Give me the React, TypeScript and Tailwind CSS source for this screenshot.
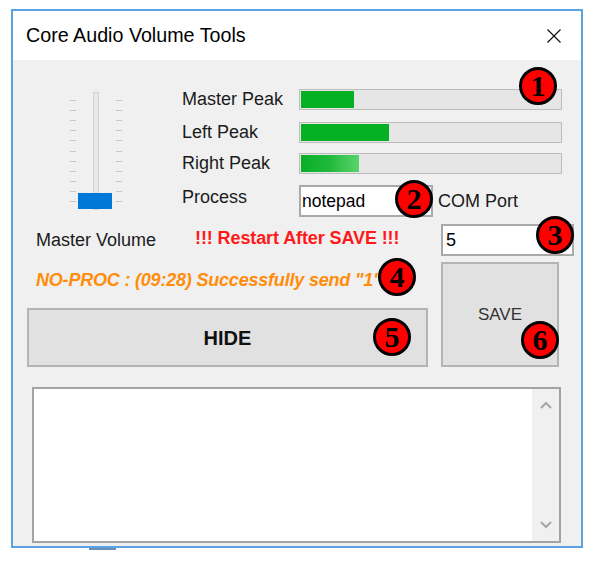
import React from "react"

const badges = [
  { n: "1", x: 519, y: 67 },
  { n: "2", x: 395, y: 180 },
  { n: "3", x: 536, y: 216 },
  { n: "4", x: 378, y: 258 },
  { n: "5", x: 373, y: 318 },
  { n: "6", x: 521, y: 321 },
]

const ticks = [8, 18, 28, 38, 48, 59, 69, 79, 89, 99, 109]

function Slider() {
  return (
    <svg width="56" height="120" viewBox="0 0 56 120" className="mt-[3px] block">
      <rect x="25.5" y="0.5" width="5" height="117" fill="#e7e7e7" stroke="#d4d4d4" />
      {ticks.map(t => (
        <g key={t}>
          <line x1="2" x2="8" y1={t + 0.5} y2={t + 0.5} stroke="#c6c6c6" />
          <line x1="48" x2="54" y1={t + 0.5} y2={t + 0.5} stroke="#c6c6c6" />
        </g>
      ))}
      <rect x="10" y="101" width="34" height="16" fill="#0078d7" />
    </svg>
  )
}

function Bar({ fill, glow }: { fill: number; glow?: boolean }) {
  return (
    <div className="w-[263px] h-[21px] border border-[#bcbcbc] bg-[#e6e6e6] p-px">
      <div
        className={glow ? "h-full bg-gradient-to-r from-[#06b025] via-[#1fb93c] to-[#58d46c]" : "h-full bg-[#06b025]"}
        style={{ width: fill }}
      />
    </div>
  )
}

export default function App() {
  return (
    <div className="relative w-[598px] h-[561px] bg-white overflow-hidden font-['Liberation_Sans',Arial,sans-serif] text-[#1b1b1b]">
      <div className="ml-[11px] mt-[9px] w-[572px] h-[539px] border-2 border-[#5aa2e4] flex flex-col">
        {/* title bar */}
        <div className="h-[49px] bg-white flex items-center justify-between pl-[13px] pr-[20px]">
          <span className="text-[19.7px] text-black">Core Audio Volume Tools</span>
          <svg width="14" height="14" viewBox="0 0 14 14">
            <path d="M0.5 0.5 L13.5 13.5 M13.5 0.5 L0.5 13.5" stroke="#111" strokeWidth="1.2" />
          </svg>
        </div>

        {/* client */}
        <div className="flex-1 bg-[#f0f0f0] flex flex-col">
          <div className="flex items-start pt-[29px] pl-[55px]">
            <Slider />
            <div className="ml-[58px] flex flex-col text-[18px]">
              <div className="flex items-center h-[21px]">
                <span className="w-[117px]">Master Peak</span>
                <Bar fill={53} />
              </div>
              <div className="flex items-center h-[21px] mt-[12px]">
                <span className="w-[117px]">Left Peak</span>
                <Bar fill={88} />
              </div>
              <div className="flex items-center h-[21px] mt-[10px]">
                <span className="w-[117px]">Right Peak</span>
                <Bar fill={58} glow />
              </div>
              <div className="flex items-center h-[32px] mt-[11px]">
                <span className="w-[117px] -mt-[8px]">Process</span>
                <div className="w-[134px] h-[32px] border-2 border-[#a9a9a9] bg-white flex items-center pl-[1px] text-[17.5px] text-black">
                  notepad
                </div>
                <span className="ml-[5px]">COM Port</span>
              </div>
            </div>
          </div>

          <div className="flex mt-[7px] pl-[14px]">
            <div className="w-[401px] flex flex-col">
              <div className="h-[32px] flex items-center pl-[9px] text-[18px]">
                <span className="w-[159px]">Master Volume</span>
                <span className="font-bold text-[#ff1a1a] tracking-[-0.1px] -mt-[3px]">!!! Restart After SAVE !!!</span>
              </div>
              <div className="mt-[12px] h-[24px] flex items-center pl-[9px] text-[18px] font-bold italic text-[#ff8c0a] tracking-[-0.2px]">
                NO-PROC : (09:28) Successfully send "1"
              </div>
              <button className="mt-[16px] h-[59px] w-[401px] bg-[#e1e1e1] border-2 border-[#b4b4b4] text-[20px] font-bold text-[#111]">
                HIDE
              </button>
            </div>
            <div className="ml-[13px] flex flex-col">
              <div className="w-[133px] h-[32px] border-2 border-[#a9a9a9] bg-white flex items-center pl-[3px] text-[18px] text-black">
                5
              </div>
              <button className="mt-[6px] w-[118px] h-[105px] bg-[#e1e1e1] border-2 border-[#b4b4b4] text-[17px] text-[#333]">
                SAVE
              </button>
            </div>
          </div>

          <div className="mt-[20px] ml-[19px] w-[529px] h-[156px] border-2 border-[#a3a3a3] bg-white flex justify-end">
            <div className="w-[27px] h-full bg-[#f0f0f0] flex flex-col items-center justify-between py-[12px]">
              <svg width="12" height="8" viewBox="0 0 12 8">
                <path d="M1 7 L6 2 L11 7" fill="none" stroke="#a6a6a6" strokeWidth="2" />
              </svg>
              <svg width="12" height="8" viewBox="0 0 12 8">
                <path d="M1 1 L6 6 L11 1" fill="none" stroke="#a6a6a6" strokeWidth="2" />
              </svg>
            </div>
          </div>
        </div>
      </div>
      <div className="ml-[89px] w-[27px] h-[2px] bg-[#6b8fb3]" />

      {badges.map(b => (
        <div
          key={b.n}
          className="absolute w-[38px] h-[38px] rounded-full bg-[#ff0000] border-[3px] border-black flex items-center justify-center font-['Liberation_Serif',serif] font-bold text-[30px] leading-none text-black"
          style={{ left: b.x, top: b.y }}
        >
          {b.n}
        </div>
      ))}
    </div>
  )
}
